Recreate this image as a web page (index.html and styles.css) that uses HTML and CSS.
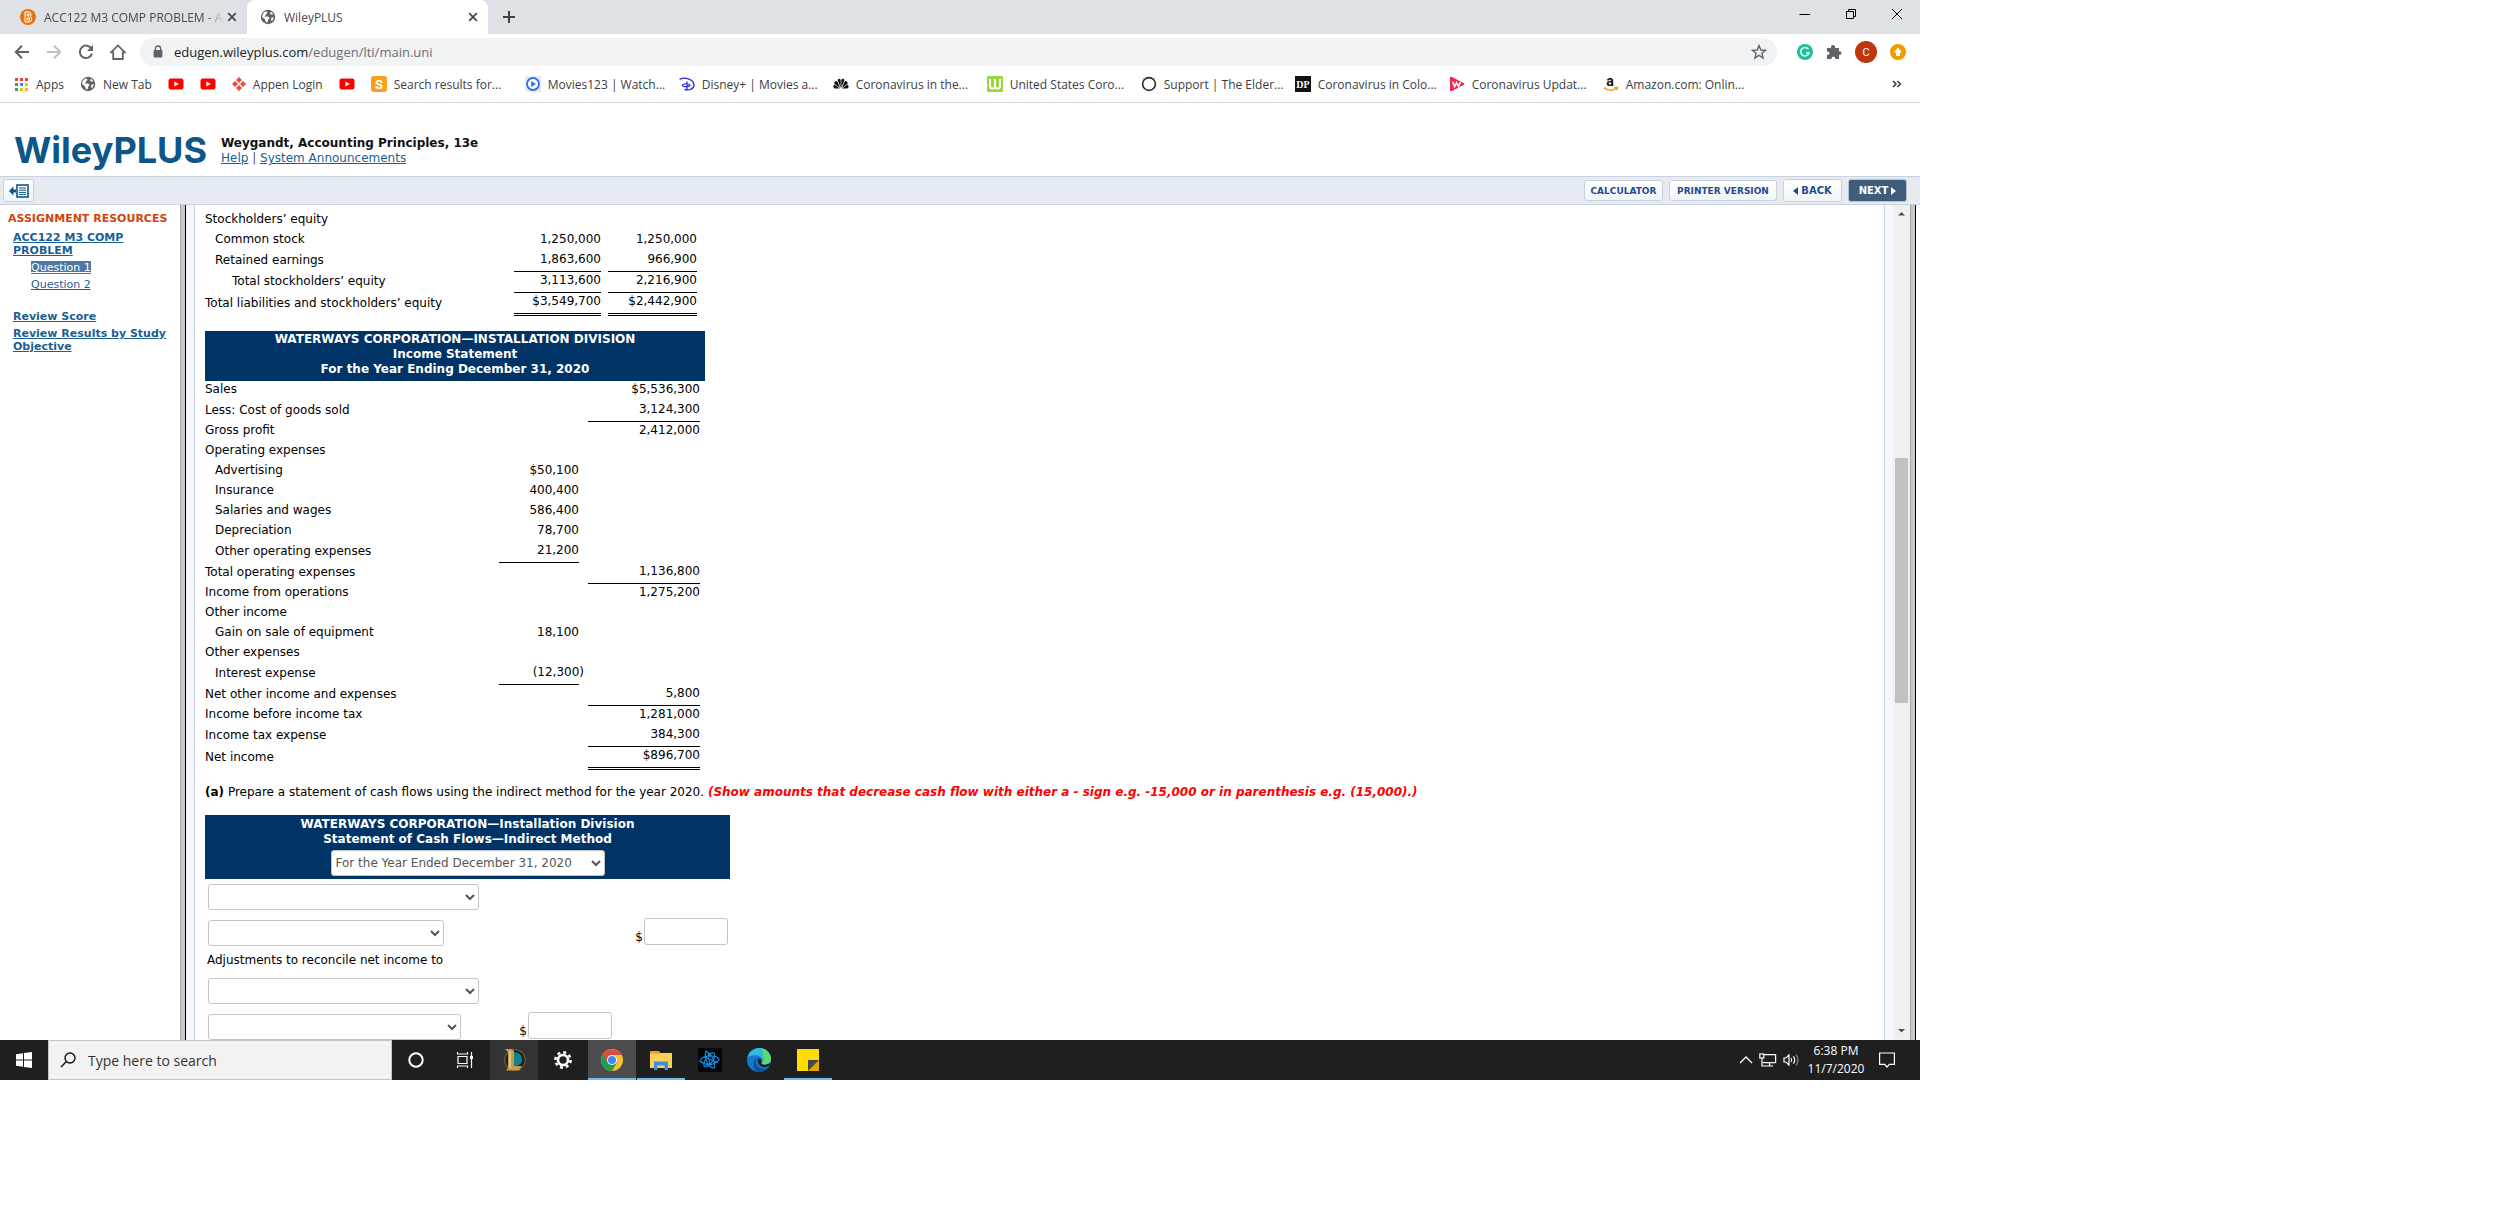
FILE: index.html
```html
<!DOCTYPE html>
<html lang="en">
<head>
	<meta charset="UTF-8">
	<title>WileyPLUS</title>
	<link rel="stylesheet" href="styles.css">
</head>
<body>
	<svg width="0" height="0" class="defs">
		<symbol id="globe" viewBox="0 0 16 16">
			<circle cx="8" cy="8" r="7.2" fill="#5f6368"/>
			<path d="M2 7.6 Q2.6 3.6 6 2.2 Q7.6 2.8 7.4 4.2 Q5.8 4.8 5.6 6.4 L4.2 7.4 H7.8 Q9.6 8 9.4 9.6 Q7.8 10.4 7.8 12.2 L7.2 13.8 Q5.6 13.4 5.4 11.4 Q5 9.6 3.4 9.2 Z M11 2.8 Q9.6 4 10.6 5.4 L13.2 5.6 Q12.6 3.8 11 2.8 Z M13.8 8.2 L11.6 8.4 Q10.6 10 11.6 12.2 Q13.4 10.8 13.8 8.2 Z" fill="#fff"/>
		</symbol>
		<symbol id="youtube" viewBox="0 0 16 16">
			<rect x="0.5" y="2.4" width="15" height="11.2" rx="2.4" fill="#f00"/>
			<path d="M6.4 5.6 L10.8 8 L6.4 10.4 Z" fill="#fff"/>
		</symbol>
		<symbol id="close" viewBox="0 0 10 10">
			<path d="M1.2 1.2 L8.8 8.8 M8.8 1.2 L1.2 8.8" stroke="#45494d" stroke-width="1.8"/>
		</symbol>
	</svg>

	<div class="desktop">
		<!-- browser -->
		<div class="tabs">
			<div class="tab">
				<svg width="16" height="16" viewBox="0 0 16 16"><circle cx="8" cy="8" r="8" fill="#e87511"/><path d="M5 3 H9 Q11.4 3.4 11 5.8 Q11 7 10 7.6 Q12 8.4 11.6 10.4 Q11.4 12.8 9 13 H5 Z M7 5 H9 V7 H7 Z M7 9 H9.4 V11 H7 Z" fill="none" stroke="#fff"/></svg>
				<span class="tab-title tab-fade">ACC122 M3 COMP PROBLEM - ACC122</span>
				<button class="icon-btn" aria-label="Close tab"><svg width="10" height="10"><use href="#close"/></svg></button>
			</div>
			<div class="tab tab-active">
				<svg width="16" height="16"><use href="#globe"/></svg>
				<span class="tab-title">WileyPLUS</span>
				<button class="icon-btn" aria-label="Close tab"><svg width="10" height="10"><use href="#close"/></svg></button>
			</div>
			<button class="icon-btn new-tab" aria-label="New tab"><svg width="14" height="14" viewBox="0 0 14 14"><path d="M7 1 V13 M1 7 H13" stroke="#3c4043" stroke-width="2"/></svg></button>
			<div class="window-btns">
				<button class="icon-btn" aria-label="Minimize"><svg width="12" height="12" viewBox="0 0 12 12"><path d="M0.5 6.5 H11" stroke="#000"/></svg></button>
				<button class="icon-btn" aria-label="Restore"><svg width="12" height="12" viewBox="0 0 12 12"><path d="M1.5 3.5 H8.5 V10.5 H1.5 Z M3.5 3 V1.5 H10.5 V8.5 H9" fill="none" stroke="#000"/></svg></button>
				<button class="icon-btn" aria-label="Close"><svg width="12" height="12" viewBox="0 0 12 12"><path d="M1 1 L11 11 M11 1 L1 11" stroke="#000"/></svg></button>
			</div>
		</div>

		<div class="address">
			<button class="icon-btn" aria-label="Back"><svg width="16" height="16" viewBox="0 0 16 16"><path d="M15 8 H2 M8 1.8 L1.8 8 L8 14.2" fill="none" stroke="#5f6368" stroke-width="2"/></svg></button>
			<button class="icon-btn" aria-label="Forward"><svg width="16" height="16" viewBox="0 0 16 16"><path d="M1 8 H14 M8 1.8 L14.2 8 L8 14.2" fill="none" stroke="#bdc1c6" stroke-width="2"/></svg></button>
			<button class="icon-btn" aria-label="Reload"><svg width="16" height="16" viewBox="0 0 16 16"><path d="M13.6 5 A6.2 6.2 0 1 0 14 9.6" fill="none" stroke="#5f6368" stroke-width="2"/><path d="M15 1 V7 H9 Z" fill="#5f6368"/></svg></button>
			<button class="icon-btn" aria-label="Home"><svg width="16" height="16" viewBox="0 0 16 16"><path d="M1 8.4 L8 1.4 L15 8.4 H12.8 V15 H3.2 V8.4 Z" fill="none" stroke="#5f6368" stroke-width="1.8"/></svg></button>
			<div class="omnibox">
				<svg width="10" height="14" viewBox="0 0 10 14"><path d="M2.4 6 V3.6 Q2.4 1 5 1 T7.6 3.6 V6" fill="none" stroke="#5f6368" stroke-width="1.4"/><rect x="0.6" y="5" width="8.8" height="7.6" rx="1" fill="#5f6368"/></svg>
				<span class="url">edugen.wileyplus.com<span class="path">/edugen/lti/main.uni</span></span>
				<button class="icon-btn" aria-label="Bookmark this tab"><svg width="16" height="16" viewBox="0 0 16 16"><path d="M8 1.6 L9.8 6 L14.6 6.3 L10.9 9.3 L12.1 14 L8 11.4 L3.9 14 L5.1 9.3 L1.4 6.3 L6.2 6 Z" fill="none" stroke="#5f6368" stroke-width="1.4"/></svg></button>
			</div>
			<div class="extensions">
				<svg width="16" height="16" viewBox="0 0 16 16"><circle cx="8" cy="8" r="8" fill="#15c39a"/><path d="M11.4 5.2 A4.2 4.2 0 1 0 12 9 H9" fill="none" stroke="#fff" stroke-width="1.5"/></svg>
				<svg width="16" height="16" viewBox="0 0 16 16"><path d="M1 4 H5 Q4.6 1 7 1 T9 4 H13 V7.2 Q15.6 7.2 15.6 9 T13 11 V15 H9.4 Q9.4 12.4 7.4 12.4 T5.4 15 H1 V11 Q3.6 11 3.6 9.2 T1 7.4 Z" fill="#5f6368"/></svg>
				<svg width="22" height="22" viewBox="0 0 22 22"><circle cx="11" cy="11" r="11" fill="#bf360c"/><text x="11" y="15" text-anchor="middle" class="glyph" font-size="11" fill="#fff">C</text></svg>
				<svg width="16" height="16" viewBox="0 0 16 16"><circle cx="8" cy="8" r="8" fill="#f29900"/><path d="M8 3.6 L12 8.4 H10 V12 H6 V8.4 H4 Z" fill="#fff"/></svg>
			</div>
		</div>

		<div class="bookmarks">
			<a class="bookmark" href="#">
				<svg width="15" height="15" viewBox="0 0 15 15"><path d="M1 1h3v3H1z M6 1h3v3H6z M11 1h3v3h-3z" fill="#ea4335"/><path d="M1 6h3v3H1z M1 11h3v3H1z" fill="#34a853"/><path d="M6 6h3v3H6z" fill="#4285f4"/><path d="M11 6h3v3h-3z M6 11h3v3H6z M11 11h3v3h-3z" fill="#fbbc05"/></svg>
				Apps
			</a>
			<a class="bookmark" href="#"><svg width="16" height="16"><use href="#globe"/></svg>New Tab</a>
			<a class="bookmark" href="#" aria-label="YouTube"><svg width="16" height="16"><use href="#youtube"/></svg></a>
			<a class="bookmark" href="#" aria-label="YouTube"><svg width="16" height="16"><use href="#youtube"/></svg></a>
			<a class="bookmark" href="#">
				<svg width="14" height="14" viewBox="0 0 14 14" fill="#f04b3a"><path d="M7 0 L10 3 L7 6 L4 3 Z M7 8 L10 11 L7 14 L4 11 Z M3 4 L6 7 L3 10 L0 7 Z M11 4 L14 7 L11 10 L8 7 Z"/></svg>
				Appen Login
			</a>
			<a class="bookmark" href="#" aria-label="YouTube"><svg width="16" height="16"><use href="#youtube"/></svg></a>
			<a class="bookmark bookmark-long" href="#">
				<svg width="16" height="16" viewBox="0 0 16 16"><rect width="16" height="16" rx="3" fill="#f9a01b"/><text x="8" y="13" text-anchor="middle" class="glyph" font-size="13" font-weight="bold" fill="#fff">S</text></svg>
				Search results for...
			</a>
			<a class="bookmark bookmark-long" href="#">
				<svg width="16" height="16" viewBox="0 0 16 16"><rect width="16" height="16" fill="#e8eaed"/><circle cx="8" cy="8" r="6" fill="#fff" stroke="#2f72ea" stroke-width="1.8"/><path d="M6.2 5 L11 8 L6.2 11 Z" fill="#2f72ea"/></svg>
				Movies123 | Watch...
			</a>
			<a class="bookmark bookmark-long" href="#">
				<svg width="16" height="16" viewBox="0 0 16 16" fill="none" stroke="#2a30e8"><path d="M0.6 3.4 C6 0.4 15.2 3.6 15 9.2 C14.8 13.4 9.6 14.6 5.4 13.4" stroke-width="1.4"/><path d="M8 5.4 V14.2 M3 9.4 C4.6 7.4 10 7.6 11 9.4 C10.2 11 5.6 11.4 3 9.4" stroke-width="1.3"/></svg>
				Disney+ | Movies a...
			</a>
			<a class="bookmark bookmark-long" href="#">
				<svg width="16" height="16" viewBox="0 0 16 16" fill="#111"><path d="M7.7 12 L4.6 4 Q6 1.8 7.7 3.8 Z M8.3 12 L11.4 4 Q10 1.8 8.3 3.8 Z M7 12 L1.2 7.6 Q1.6 4 4.4 5.4 Z M9 12 L14.8 7.6 Q14.4 4 11.6 5.4 Z M6.8 12.6 H1.6 Q-1 10.6 1.6 8.4 Z M9.2 12.6 H14.4 Q17 10.6 14.4 8.4 Z"/></svg>
				Coronavirus in the...
			</a>
			<a class="bookmark bookmark-long" href="#">
				<svg width="16" height="16" viewBox="0 0 16 16"><rect width="16" height="16" rx="1" fill="#9bd63c"/><path d="M3 3 V10 Q3 12.6 5.4 12.6 T8 10 V3 M8 10 Q8 12.6 10.6 12.6 T13 10 V3" fill="none" stroke="#fff" stroke-width="2"/></svg>
				United States Coro...
			</a>
			<a class="bookmark bookmark-long" href="#">
				<svg width="16" height="16" viewBox="0 0 16 16"><circle cx="8" cy="8" r="6.4" fill="none" stroke="#2b2a26" stroke-width="1.6"/><path d="M2.6 2.6 L4 4 M13.4 2.6 L12 4" stroke="#2b2a26"/></svg>
				Support | The Elder...
			</a>
			<a class="bookmark bookmark-long" href="#">
				<svg width="16" height="16" viewBox="0 0 16 16"><rect width="16" height="16" fill="#111"/><text x="8" y="12" text-anchor="middle" class="glyph-serif" font-size="10" font-weight="bold" fill="#fff">DP</text></svg>
				Coronavirus in Colo...
			</a>
			<a class="bookmark bookmark-long" href="#">
				<svg width="16" height="16" viewBox="0 0 16 16"><path d="M1 2 Q1 0 3 1 L14.6 7 Q16 8 14.6 9 L3 15 Q1 16 1 14 Z" fill="#f5274e"/><path d="M3.6 5.6 L5.6 10.6 L7.6 6.6 L9.6 10.6 L11.4 6" fill="none" stroke="#fff" stroke-width="1.6"/></svg>
				Coronavirus Updat...
			</a>
			<a class="bookmark bookmark-long" href="#">
				<svg width="16" height="16" viewBox="0 0 16 16"><text x="7" y="10" text-anchor="middle" class="glyph" font-size="14" font-weight="bold" fill="#111">a</text><path d="M1 11.6 Q7 16.4 13 12.6 M11.4 11.8 L14.4 11.6 L13.8 14" fill="none" stroke="#f90" stroke-width="1.5"/></svg>
				Amazon.com: Onlin...
			</a>
			<button class="icon-btn more" aria-label="More bookmarks"><svg width="10" height="8" viewBox="0 0 10 8"><path d="M1 1 L4 4 L1 7 M5.4 1 L8.4 4 L5.4 7" fill="none" stroke="#3c4043" stroke-width="1.6"/></svg></button>
		</div>

		<!-- course header -->
		<header class="brand">
			<div class="logo">WileyPLUS</div>
			<div class="course">
				<h1>Weygandt, Accounting Principles, 13e</h1>
				<p><a href="#">Help</a> | <a href="#">System Announcements</a></p>
			</div>
		</header>

		<nav class="toolbar">
			<button class="btn btn-toggle" aria-label="Hide resources"><svg width="20" height="16" viewBox="0 0 20 16"><path d="M0 8 L4.4 3.6 V6.4 H7 V9.6 H4.4 V12.4 Z" fill="#0d568a"/><rect x="8" y="2" width="11" height="12" fill="#fff" stroke="#0d568a" stroke-width="1.6"/><path d="M10 5 H17 M10 7.2 H17 M10 9.4 H17 M10 11.4 H17" stroke="#0d568a"/></svg></button>
			<div class="actions">
				<button class="btn btn-small">CALCULATOR</button>
				<button class="btn btn-small btn-printer">PRINTER VERSION</button>
				<button class="btn"><svg width="5" height="8" viewBox="0 0 5 8"><path d="M5 0 V8 L0 4 Z" fill="#1f4b8f"/></svg>BACK</button>
				<button class="btn btn-next">NEXT<svg width="5" height="8" viewBox="0 0 5 8"><path d="M0 0 V8 L5 4 Z" fill="#fff"/></svg></button>
			</div>
		</nav>

		<div class="page">
			<aside class="sidebar">
				<h2>ASSIGNMENT RESOURCES</h2>
				<ul>
					<li><a href="#">ACC122 M3 COMP PROBLEM</a>
						<ul class="questions">
							<li><a class="current" href="#">Question 1</a></li>
							<li><a href="#">Question 2</a></li>
						</ul>
					</li>
					<li><a href="#">Review Score</a></li>
					<li><a href="#">Review Results by Study Objective</a></li>
				</ul>
			</aside>
			<div class="divider"></div>

			<main class="content">
				<table class="statement balance">
					<colgroup><col class="label"><col class="amount"><col class="gap"><col class="amount-last"></colgroup>
					<tr><td>Stockholders’ equity</td><td></td><td></td><td></td></tr>
					<tr><td class="in1">Common stock</td><td class="amt">1,250,000</td><td></td><td class="amt">1,250,000</td></tr>
					<tr><td class="in1">Retained earnings</td><td class="amt rule">1,863,600</td><td></td><td class="amt rule">966,900</td></tr>
					<tr><td class="in2">Total stockholders’ equity</td><td class="amt rule">3,113,600</td><td></td><td class="amt rule">2,216,900</td></tr>
					<tr><td>Total liabilities and stockholders’ equity</td><td class="amt double">$3,549,700</td><td></td><td class="amt double">$2,442,900</td></tr>
				</table>

				<table class="statement income">
					<colgroup><col class="label"><col class="amount"><col class="gap"><col class="amount-last"><col></colgroup>
					<thead>
						<tr><th colspan="5">WATERWAYS CORPORATION—INSTALLATION DIVISION<br>Income Statement<br>For the Year Ending December 31, 2020</th></tr>
					</thead>
					<tbody>
						<tr><td>Sales</td><td></td><td></td><td class="amt">$5,536,300</td><td></td></tr>
						<tr><td>Less: Cost of goods sold</td><td></td><td></td><td class="amt rule">3,124,300</td><td></td></tr>
						<tr><td>Gross profit</td><td></td><td></td><td class="amt">2,412,000</td><td></td></tr>
						<tr><td>Operating expenses</td><td></td><td></td><td></td><td></td></tr>
						<tr><td class="in1">Advertising</td><td class="amt">$50,100</td><td></td><td></td><td></td></tr>
						<tr><td class="in1">Insurance</td><td class="amt">400,400</td><td></td><td></td><td></td></tr>
						<tr><td class="in1">Salaries and wages</td><td class="amt">586,400</td><td></td><td></td><td></td></tr>
						<tr><td class="in1">Depreciation</td><td class="amt">78,700</td><td></td><td></td><td></td></tr>
						<tr><td class="in1">Other operating expenses</td><td class="amt rule">21,200</td><td></td><td></td><td></td></tr>
						<tr><td>Total operating expenses</td><td></td><td></td><td class="amt rule">1,136,800</td><td></td></tr>
						<tr><td>Income from operations</td><td></td><td></td><td class="amt">1,275,200</td><td></td></tr>
						<tr><td>Other income</td><td></td><td></td><td></td><td></td></tr>
						<tr><td class="in1">Gain on sale of equipment</td><td class="amt">18,100</td><td></td><td></td><td></td></tr>
						<tr><td>Other expenses</td><td></td><td></td><td></td><td></td></tr>
						<tr><td class="in1">Interest expense</td><td class="amt rule"><span class="neg">(12,300)</span></td><td></td><td></td><td></td></tr>
						<tr><td>Net other income and expenses</td><td></td><td></td><td class="amt rule">5,800</td><td></td></tr>
						<tr><td>Income before income tax</td><td></td><td></td><td class="amt">1,281,000</td><td></td></tr>
						<tr><td>Income tax expense</td><td></td><td></td><td class="amt rule">384,300</td><td></td></tr>
						<tr><td>Net income</td><td></td><td></td><td class="amt double">$896,700</td><td></td></tr>
					</tbody>
				</table>

				<p class="task"><b>(a)</b> Prepare a statement of cash flows using the indirect method for the year 2020. <em>(Show amounts that decrease cash flow with either a - sign e.g. -15,000 or in parenthesis e.g. (15,000).)</em></p>

				<table class="cashflow">
					<thead>
						<tr>
							<th colspan="3">
								WATERWAYS CORPORATION—Installation Division<br>Statement of Cash Flows—Indirect Method
								<select class="period" aria-label="Period"><option>For the Year Ended December 31, 2020</option></select>
							</th>
						</tr>
					</thead>
					<tbody>
						<tr><td class="entry"><select class="section" aria-label="Section"><option></option></select></td><td class="sub"></td><td></td></tr>
						<tr>
							<td><select class="line-short" aria-label="Line item"><option></option></select></td>
							<td></td>
							<td><label class="money">$<input type="text"></label></td>
						</tr>
						<tr class="note"><td>Adjustments to reconcile net income to</td><td></td><td></td></tr>
						<tr><td><select class="section" aria-label="Adjustment section"><option></option></select></td><td></td><td></td></tr>
						<tr>
							<td><select class="line-long" aria-label="Adjustment"><option></option></select></td>
							<td><label class="money">$<input type="text"></label></td>
							<td></td>
						</tr>
					</tbody>
				</table>
			</main>

			<div class="scrollbar">
				<svg width="17" height="17" viewBox="0 0 17 17"><path d="M5 10.5 L8.5 7 L12 10.5 Z" fill="#505050"/></svg>
				<div class="track"><div class="thumb"></div></div>
				<svg width="17" height="17" viewBox="0 0 17 17"><path d="M5 6 L8.5 9.5 L12 6 Z" fill="#505050"/></svg>
			</div>
			<div class="divider"></div>
		</div>

		<!-- taskbar -->
		<footer class="taskbar">
			<button class="task-btn" aria-label="Start"><svg width="16" height="16" viewBox="0 0 16 16" fill="#fff"><path d="M0 2.2 L7 1.2 V7.6 H0 Z M8 1 L16 0 V7.6 H8 Z M0 8.4 H7 V14.8 L0 13.8 Z M8 8.4 H16 V16 L8 15 Z"/></svg></button>
			<label class="search">
				<svg width="16" height="16" viewBox="0 0 16 16"><circle cx="10" cy="6" r="5" fill="none" stroke="#111" stroke-width="1.4"/><path d="M6.4 9.6 L1 15" stroke="#111" stroke-width="1.4"/></svg>
				<input type="text" placeholder="Type here to search">
			</label>
			<div class="apps">
				<button class="task-btn" aria-label="Cortana"><svg width="16" height="16" viewBox="0 0 16 16"><circle cx="8" cy="8" r="6.7" fill="none" stroke="#fff" stroke-width="2"/></svg></button>
				<button class="task-btn" aria-label="Task View"><svg width="18" height="16" viewBox="0 0 18 16"><path d="M2 4.5 H11 V11.5 H2 Z M1.5 0 V2 H11.5 V0 M1.5 16 V14 H11.5 V16 M15.5 0 V16" fill="none" stroke="#fff" stroke-width="1.2"/><rect x="14" y="4" width="3" height="3" fill="#fff"/></svg></button>
				<button class="task-btn task-hover" aria-label="League of Legends"><svg width="24" height="24" viewBox="0 0 24 24"><circle cx="13" cy="12" r="10.4" fill="#0e2230" stroke="#6b5427" stroke-width="1.4"/><path d="M12 4 Q21 5 20 13 Q19 18 12 18 Z" fill="#13808c"/><path d="M3 1 H10 L12 3 V18 H20 L17 22.6 H4 L6 19.6 V4 Z" fill="#c79a4c"/><path d="M8 3 V20" stroke="#efd08a" stroke-width="1.6"/></svg></button>
				<button class="task-btn" aria-label="Settings"><svg width="18" height="18" viewBox="0 0 18 18" fill="none" stroke="#fff"><circle cx="9" cy="9" r="5" stroke-width="2.6"/><circle cx="9" cy="9" r="7.6" stroke-width="2.6" stroke-dasharray="3 2.97"/></svg></button>
				<button class="task-btn task-active" aria-label="Chrome"><svg width="22" height="22" viewBox="0 0 22 22"><circle cx="11" cy="11" r="11" fill="#fbc02d"/><path d="M11 11 L1.5 5.5 A11 11 0 0 0 11 22 L15.8 13.7 Z" fill="#1e9e54"/><path d="M1.5 5.5 A11 11 0 0 1 20.6 6 H11 A5.2 5.2 0 0 0 6.4 13.6 Z" fill="#dd4b3e"/><circle cx="11" cy="11" r="5" fill="#fff"/><circle cx="11" cy="11" r="4" fill="#4285f4"/></svg></button>
				<button class="task-btn task-open" aria-label="File Explorer"><svg width="22" height="19" viewBox="0 0 22 19"><path d="M1 0 H9 L10 2 H22 V17 H0 V1 Z" fill="#ffcf57"/><path d="M1 0 H9 L9.6 2.4 H0 V1 Z" fill="#e8a317"/><path d="M4 10.5 H18 V19 H14.6 V14.6 H7.4 V19 H4 Z" fill="#3a8fd6"/></svg></button>
				<button class="task-btn" aria-label="Battle.net"><svg width="24" height="24" viewBox="0 0 24 24"><rect width="24" height="24" rx="2" fill="#020509"/><path d="M8 3 Q6 8 9 14 Q12 20 16 20 Q18 18 15 11 Q12 5 8 3 Z M2 13 Q4 8 12 8 Q20 8 21 11 Q21 13 15 16 Q8 18 2 13 Z M16 5 Q18 8 14 14 Q9 20 6 18 Q5 15 9 9 Q13 4 16 5 Z M6 9 L20 15 M10 4 L12 19" fill="none" stroke="#1590e0" stroke-width="1.2"/></svg></button>
				<button class="task-btn" aria-label="Edge"><svg width="24" height="24" viewBox="0 0 24 24"><circle cx="12" cy="12" r="12" fill="#1576cf"/><path d="M0.4 10 C2 2 9 0 12 0 C20 0 24 6 24 11 C24 16 18 18 14.6 16 C17 13 15 8 10 7.4 C5 7 2 8 0.4 10 Z" fill="#2fb9dc"/><path d="M14 0.2 C20 1 24 6 24 11 C24 16 18 18 14.6 16 C18 12 17 6 14 0.2 Z" fill="#5cdc6c"/><path d="M9 14 C9 19 14 22 20.8 19.8 C18 23 14 24 12 24 C6 23 4 14 10 9.6 C9 11 9 12.6 9 14 Z" fill="#104f9c"/><path d="M11 11 C13 9.6 15.4 12 14.2 14.6 C13.6 16.6 17 17.6 21 16 L24 15 L21.8 18 C17 21 10 18 11 11 Z" fill="#1d1d1d"/></svg></button>
				<button class="task-btn task-open" aria-label="Sticky Notes"><svg width="22" height="22" viewBox="0 0 22 22"><path d="M0 0 H22 V22 H0 Z" fill="#fd0"/><path d="M11 22 V11 H22 V22 Z" fill="#45474b"/><path d="M22 11 V22 H11 Z" fill="#e0a800"/></svg></button>
			</div>
			<div class="tray">
				<svg width="14" height="8" viewBox="0 0 14 8"><path d="M1 7 L7 1 L13 7" fill="none" stroke="#fff" stroke-width="1.3"/></svg>
				<svg width="18" height="14" viewBox="0 0 18 14" fill="none" stroke="#fff" stroke-width="1.2"><path d="M5 1.6 H16.6 V9.6 H4 M10.6 9.6 V13 M7 13 H14 M3 5 V13 H7"/><rect x="0.8" y="1" width="4" height="4"/></svg>
				<svg width="16" height="14" viewBox="0 0 16 14" fill="none" stroke="#fff" stroke-width="1.2"><path d="M1 5 H3 L6 2 V12 L3 9 H1 Z M8 5 Q9.4 7 8 9 M10.4 3.4 Q13 7 10.4 10.6"/><path d="M13 1.6 Q17 7 13 12.4" stroke="#888"/></svg>
				<div class="clock">6:38 PM<br>11/7/2020</div>
				<button class="icon-btn" aria-label="Notifications"><svg width="18" height="16" viewBox="0 0 18 16"><path d="M1.6 1 H16.4 V12.4 H11.4 L9 15 L6.6 12.4 H1.6 Z" fill="none" stroke="#fff" stroke-width="1.2"/></svg></button>
			</div>
		</footer>
	</div>
</body>
</html>
```
FILE: styles.css
```css
* {
	box-sizing: border-box;
}

body {
	margin: 0;
	background-color: #fff;
	font-family: Verdana, "DejaVu Sans", sans-serif;
	font-size: 12px;
	line-height: 15px;
	color: #000;
}

h1, h2, p, ul {
	margin: 0;
	padding: 0;
}

ul {
	list-style: none;
}

a {
	color: #1a5f94;
}

button, select, input {
	font-family: inherit;
	margin: 0;
}

svg {
	display: block;
	flex: none;
}

.defs {
	position: absolute;
}

.glyph {
	font-family: Roboto, sans-serif;
}

.glyph-serif {
	font-family: "Liberation Serif", serif;
}

.desktop {
	display: flex;
	flex-direction: column;
	max-width: 1920px;
	aspect-ratio: 16 / 9;
	overflow: hidden;
}

.icon-btn {
	display: flex;
	padding: 0;
	border: 0;
	background: none;
}

/* browser */

.tabs, .address, .bookmarks, .taskbar {
	display: flex;
	align-items: center;
	flex: none;
	font-family: "Segoe UI", "Open Sans", sans-serif;
	font-size: 12px;
}

.tabs {
	height: 34px;
	background-color: #dee1e6;
}

.tab {
	display: flex;
	align-items: center;
	gap: 4px;
	width: 247px;
	height: 34px;
	padding: 0 10px 0 20px;
	color: #45494d;
}

.tab-active {
	width: 241px;
	padding-left: 13px;
	background-color: #fff;
	border-radius: 8px 8px 0 0;
}

.tab-title {
	flex: 1;
	padding-left: 4px;
	overflow: hidden;
	white-space: nowrap;
}

.tab-fade {
	-webkit-mask-image: linear-gradient(to right, #000 90%, transparent);
	mask-image: linear-gradient(to right, #000 90%, transparent);
}

.new-tab {
	margin-left: 14px;
}

.window-btns {
	display: flex;
	gap: 34px;
	margin: 0 17px 6px auto;
}

.address {
	height: 36px;
	gap: 16px;
	padding: 0 14px;
}

.omnibox {
	display: flex;
	align-items: center;
	flex: 1;
	height: 28px;
	margin: 0 -2px;
	padding: 0 10px 0 13px;
	background-color: #f1f3f4;
	border-radius: 14px;
}

.url {
	flex: 1;
	margin-left: 11px;
	font-size: 13px;
	color: #202124;
}

.path {
	color: #6a6e73;
}

.extensions {
	display: flex;
	align-items: center;
	gap: 13px;
	margin-left: 6px;
}

.bookmarks {
	height: 33px;
	gap: 16px;
	padding: 0 18px 4px 14px;
	border-bottom: 1px solid #d5d7da;
}

.bookmark {
	display: flex;
	align-items: center;
	gap: 7px;
	color: #3c4043;
	text-decoration: none;
	white-space: nowrap;
}

.bookmark-long {
	width: 138px;
}

.more {
	margin-left: auto;
}

/* course header */

.brand {
	display: flex;
	flex: none;
	height: 73px;
	padding: 29px 0 0 14px;
}

.logo {
	width: 207px;
	font-family: Inter, sans-serif;
	font-size: 36px;
	font-weight: 700;
	line-height: 36px;
	color: #0d568a;
}

.course {
	padding-top: 4px;
	color: #555;
}

.course h1 {
	font-size: 12px;
	color: #111;
}

.toolbar {
	display: flex;
	align-items: center;
	justify-content: space-between;
	flex: none;
	height: 29px;
	padding: 0 13px 0 3px;
	background-color: #e6ebef;
	border: 1px solid #c8d2e0;
	border-width: 1px 0;
}

.actions {
	display: flex;
	align-items: center;
	gap: 6px;
}

.btn {
	display: flex;
	align-items: center;
	justify-content: center;
	gap: 3px;
	width: 59px;
	height: 23px;
	padding: 0;
	background-image: linear-gradient(#fff, #f1f4f7);
	border: 1px solid #c8d2e0;
	border-radius: 3px;
	font-size: 10px;
	font-weight: bold;
	color: #1f4b8f;
}

.btn-toggle {
	width: 31px;
}

.btn-small {
	width: 79px;
	height: 21px;
	font-size: 9px;
}

.btn-printer {
	width: 108px;
}

.btn-next {
	background: #3f5d7a;
	border-color: #b4c4d6;
	color: #fff;
}

.page {
	display: flex;
	flex: 1;
	min-height: 0;
	background-color: #f4f8fc;
	border-right: 4px solid #fff;
}

.sidebar {
	flex: none;
	width: 180px;
	padding: 7px 5px 0 8px;
	background-color: #fff;
	font-size: 11px;
	line-height: 13px;
}

.sidebar h2 {
	font-size: 11px;
	white-space: nowrap;
	color: #d3440b;
}

.sidebar ul {
	padding: 6px 0 0 5px;
	font-weight: bold;
}

.sidebar li {
	margin-bottom: 4px;
}

.sidebar .questions {
	padding: 4px 0 11px 18px;
	font-weight: normal;
}

.sidebar .current {
	background-color: #4f77a3;
	color: #fff;
}

.divider {
	flex: none;
	width: 6px;
	background-color: #c8c8c8;
	border-left: 1px solid #a5a5a5;
	border-right: 1px solid #000;
}

.content {
	flex: 1;
	overflow: hidden;
	margin: 0 8px;
	padding: 6px 10px 0;
	background-color: #fff;
	border: 1px solid #c8d2e0;
	border-width: 0 1px;
}

.scrollbar {
	display: flex;
	flex-direction: column;
	flex: none;
	width: 17px;
	background-color: #f0f0f0;
}

.track {
	flex: 1;
	padding: 236px 2px 0;
}

.thumb {
	height: 245px;
	background-color: #c1c1c1;
}

/* statements */

table {
	border-spacing: 0;
}

td {
	padding: 0;
}

th {
	padding: 1px 0 4px;
	background-color: #003366;
	color: #fff;
}

.statement {
	margin-bottom: 15px;
	table-layout: fixed;
}

.statement td {
	height: 20px;
	padding: 1px 0 4px;
	white-space: nowrap;
}

.statement td.amt {
	text-align: right;
	vertical-align: top;
}

.statement td.in1 {
	padding-left: 10px;
}

.statement td.in2 {
	padding-left: 27px;
}

.statement td.rule {
	border-bottom: 1px solid #000;
}

.statement td.double {
	border-bottom: 3px double #000;
}

.neg {
	margin-right: -5px;
}

.balance {
	width: 492px;
}

.balance .label {
	width: 309px;
}

.balance .amount {
	width: 87px;
}

.balance .gap {
	width: 7px;
}

.income {
	width: 500px;
}

.income .label {
	width: 294px;
}

.income .amount {
	width: 80px;
}

.income .gap {
	width: 9px;
}

.income .amount-last {
	width: 112px;
}

.task {
	margin-bottom: 15px;
}

.task em {
	font-weight: bold;
	color: #f00;
}

.cashflow {
	width: 525px;
}

.cashflow th {
	padding: 2px 0 3px;
}

.cashflow td {
	height: 36px;
	padding: 0 2px;
	vertical-align: top;
}

.cashflow .note td {
	height: 22px;
	padding-top: 2px;
}

.cashflow .entry {
	width: 293px;
}

.cashflow .sub {
	width: 116px;
}

.cashflow select {
	display: block;
	height: 26px;
	margin: 5px 1px 0;
	background-color: #fff;
	border: 1px solid #c4c4c4;
	border-radius: 3px;
	font-size: 12px;
	color: #555;
}

.cashflow .period {
	width: 274px;
	margin: 3px auto 0;
}

.cashflow .section {
	width: 271px;
}

.cashflow .line-short {
	width: 236px;
}

.cashflow .line-long {
	width: 253px;
}

.money {
	display: flex;
	align-items: flex-end;
	justify-content: flex-end;
	gap: 1px;
	padding-top: 3px;
}

.money input {
	width: 84px;
	height: 27px;
	border: 1px solid #c4c4c4;
	border-radius: 3px;
}

/* taskbar */

.taskbar {
	height: 40px;
	padding-right: 24px;
	background-color: #1f1f1f;
	color: #fff;
}

.task-btn {
	display: flex;
	align-items: center;
	justify-content: center;
	width: 48px;
	height: 40px;
	padding: 0;
	border: 0;
	background: none;
}

.task-hover {
	background-color: #333;
}

.task-active {
	background-color: #4d4d4d;
}

.task-active, .task-open {
	border-bottom: 2px solid #76b9ed;
	padding-top: 2px;
}

.search {
	display: flex;
	align-items: center;
	gap: 12px;
	width: 344px;
	height: 40px;
	padding-left: 11px;
	background-color: #f2f2f2;
	border: 1px solid #c4c4c4;
}

.search input {
	flex: 1;
	padding: 0;
	border: 0;
	background: none;
	font-size: 14px;
}

.search input::placeholder {
	color: #333;
}

.apps {
	display: flex;
	gap: 1px;
}

.tray {
	display: flex;
	align-items: center;
	gap: 6px;
	margin-left: auto;
}

.clock {
	width: 58px;
	margin: 0 7px 0 2px;
	line-height: 18px;
	text-align: center;
}
```
